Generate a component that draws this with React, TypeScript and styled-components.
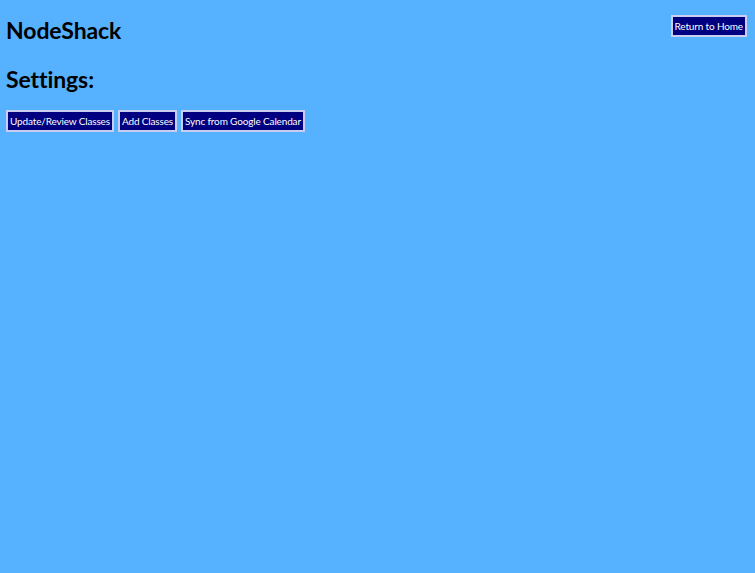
import React from "react";
import styled, { createGlobalStyle } from "styled-components";

const GlobalStyle = createGlobalStyle`
  html, body {
    margin: 0;
    padding: 0;
    background: #56b1ff;
  }
  body {
    font-family: Lato, "Open Sans", "Liberation Sans", sans-serif;
    color: #000;
  }
`;

const Page = styled.div`
  min-height: 573px;
  padding: 0 8px 0 6px;
  box-sizing: border-box;
  background: #56b1ff;
`;

const Header = styled.header`
  display: flex;
  justify-content: space-between;
  align-items: flex-start;
`;

const Title = styled.h1`
  margin: 0;
  padding-top: 16px;
  font-size: 23px;
  font-weight: 700;
  line-height: 28px;
  letter-spacing: -0.1px;
`;

const SectionTitle = styled.h2`
  margin: 0;
  padding-top: 21px;
  font-size: 23px;
  font-weight: 700;
  line-height: 28px;
  letter-spacing: -0.1px;
`;

const ButtonRow = styled.div`
  display: flex;
  gap: 4px;
  margin-top: 17px;
`;

const NavButton = styled.button<{ $top?: number }>`
  box-sizing: border-box;
  height: 22px;
  margin-top: ${(p) => p.$top ?? 0}px;
  padding: 0 2px;
  background: #000080;
  color: #fff;
  border: 2px solid #c9cdf0;
  font-family: Lato, "Open Sans", "Liberation Sans", sans-serif;
  font-size: 10px;
  letter-spacing: -0.15px;
  line-height: 1;
  cursor: pointer;
  white-space: nowrap;
`;

export default function App() {
  return (
    <>
      <GlobalStyle />
      <Page>
        <Header>
          <Title>NodeShack</Title>
          <NavButton $top={15}>Return to Home</NavButton>
        </Header>
        <SectionTitle>Settings:</SectionTitle>
        <ButtonRow>
          <NavButton>Update/Review Classes</NavButton>
          <NavButton>Add Classes</NavButton>
          <NavButton>Sync from Google Calendar</NavButton>
        </ButtonRow>
      </Page>
    </>
  );
}
